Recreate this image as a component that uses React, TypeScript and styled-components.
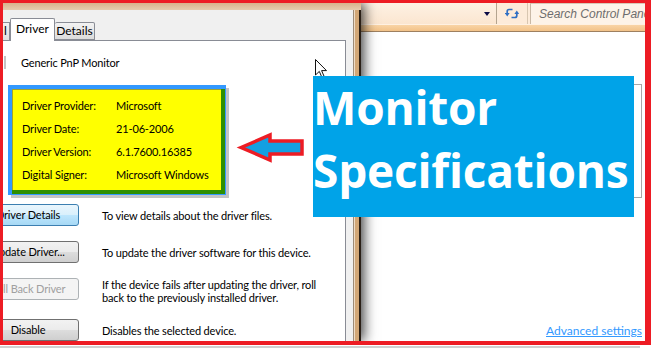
import styled, { createGlobalStyle } from "styled-components";

const GlobalStyle = createGlobalStyle`
  html, body {
    margin: 0;
    padding: 0;
    background: #fff;
  }
  body {
    width: 651px;
    height: 348px;
    overflow: hidden;
  }
`;

const ui = `"Lato", "Liberation Sans", sans-serif`;

const driverInfo = [
  ["Driver Provider:", "Microsoft"],
  ["Driver Date:", "21-06-2006"],
  ["Driver Version:", "6.1.7600.16385"],
  ["Digital Signer:", "Microsoft Windows"],
];

const actions: {
  label: string;
  text: string;
  variant: "hot" | "normal" | "disabled";
  top?: boolean;
}[] = [
  { label: "Driver Details", text: "To view details about the driver files.", variant: "hot" },
  { label: "Update Driver...", text: "To update the driver software for this device.", variant: "normal" },
  {
    label: "Roll Back Driver",
    text: "If the device fails after updating the driver, roll back to the previously installed driver.",
    variant: "disabled",
    top: true,
  },
  { label: "Disable", text: "Disables the selected device.", variant: "normal" },
];

export default function App() {
  return (
    <>
      <GlobalStyle />
      <Page>
        <Frame>
          <Dialog>
            <DialogTop />
            <DialogMain>
              <DialogBody>
                <Tabs>
                  <TabStub>l</TabStub>
                  <Tab $active $width={45}>Driver</Tab>
                  <Tab $width={40}>Details</Tab>
                </Tabs>
                <Panel>
                  <DeviceHeader>
                    <DeviceIcon />
                    <DeviceName>Generic PnP Monitor</DeviceName>
                  </DeviceHeader>
                  <InfoFrame>
                    <InfoBox>
                      {driverInfo.map(([k, v]) => (
                        <InfoRow key={k}>
                          <span>{k}</span>
                          <span>{v}</span>
                        </InfoRow>
                      ))}
                    </InfoBox>
                  </InfoFrame>
                  <ActionList>
                    {actions.map((a) => (
                      <ActionRow key={a.label} $top={a.top}>
                        <WinButton $variant={a.variant}>{a.label}</WinButton>
                        <ActionText>{a.text}</ActionText>
                      </ActionRow>
                    ))}
                  </ActionList>
                </Panel>
              </DialogBody>
              <DialogEdge />
            </DialogMain>
          </Dialog>

          <CPWindow>
            <CPToolbar>
              <AddressBox>
                <DropArrow />
              </AddressBox>
              <RefreshButton>
                <svg width="14" height="13" viewBox="0 0 14 13">
                  <path d="M7.5 2.5 H4 Q2.2 2.5 2.2 4.5 V6.5" fill="none" stroke="#2f6fc4" strokeWidth="1.7" />
                  <path d="M-0.2 6 L2.2 9.5 L4.6 6 Z" fill="#2f6fc4" />
                  <path d="M6.5 10.5 H10 Q11.8 10.5 11.8 8.5 V6.5" fill="none" stroke="#2f6fc4" strokeWidth="1.7" />
                  <path d="M9.4 7 L11.8 3.5 L14.2 7 Z" fill="#2f6fc4" />
                </svg>
              </RefreshButton>
              <SearchBox>Search Control Panel</SearchBox>
            </CPToolbar>
            <CPBand />
            <CPBody>
              <SpecFrame />
              <AdvancedLink>Advanced settings</AdvancedLink>
            </CPBody>
          </CPWindow>
        </Frame>
        <BottomStrip />

        <Cursor width="13" height="20" viewBox="0 0 13 20">
          <path d="M0.5 0.5 V16 L4.3 12.4 L7 18.6 L9.2 17.6 L6.6 11.6 H11.5 Z" fill="#fff" stroke="#111" strokeWidth="1" />
        </Cursor>

        <Arrow width="74" height="35" viewBox="0 0 74 35">
          <polygon
            points="7,17.5 36,5 36,11 68,11 68,24 36,24 36,30"
            fill="#14a0e2"
            stroke="#ed1c24"
            strokeWidth="3.5"
          />
        </Arrow>

        <TitleBanner>
          Monitor
          <br />
          Specifications
        </TitleBanner>
      </Page>
    </>
  );
}

const Page = styled.div`
  position: relative;
  width: 651px;
  height: 348px;
  overflow: hidden;
  font-family: ${ui};
  background: #fff;
`;

const Frame = styled.div`
  box-sizing: border-box;
  height: 345px;
  border-style: solid;
  border-color: #ed1c24;
  border-width: 3px 6px 4px 3px;
  display: flex;
  overflow: hidden;
`;

const Dialog = styled.div`
  width: 358px;
  flex-shrink: 0;
  display: flex;
  flex-direction: column;
  position: relative;
  z-index: 1;
  box-shadow: 3px 0 12px rgba(0, 0, 0, 0.75);
`;

const DialogTop = styled.div`
  height: 7px;
  background: linear-gradient(#d8b28b, #e7ccae);
`;

const DialogMain = styled.div`
  flex: 1;
  display: flex;
  min-height: 0;
`;

const DialogBody = styled.div`
  flex: 1;
  background: #f0f0f0;
  display: flex;
  flex-direction: column;
  overflow: hidden;
`;

const DialogEdge = styled.div`
  width: 8px;
  background: linear-gradient(
    to right,
    #9c8b78 0 1px,
    #efdcc6 1px 2px,
    #d3a878 2px 6px,
    #2a1f16 6px 8px
  );
`;

const Tabs = styled.div`
  height: 30px;
  display: flex;
  align-items: flex-end;
  flex-shrink: 0;
`;

const TabStub = styled.div`
  box-sizing: border-box;
  width: 7px;
  height: 18px;
  border-top: 1px solid #898c95;
  border-right: 1px solid #898c95;
  background: linear-gradient(#f2f2f2, #e0e0e0);
  font-size: 12px;
  line-height: 16px;
  padding-left: 1px;
  overflow: hidden;
  color: #000;
`;

const Tab = styled.div<{ $active?: boolean; $width: number }>`
  box-sizing: border-box;
  position: relative;
  z-index: 2;
  width: ${(p) => p.$width}px;
  height: ${(p) => (p.$active ? 23 : 18)}px;
  margin-bottom: ${(p) => (p.$active ? -1 : 0)}px;
  border: 1px solid #898c95;
  border-bottom: ${(p) => (p.$active ? "none" : "1px solid #898c95")};
  border-left: ${(p) => (p.$active ? "1px solid #898c95" : "none")};
  border-radius: 2px 2px 0 0;
  background: ${(p) => (p.$active ? "#fff" : "linear-gradient(#f3f3f3, #dcdcdc)")};
  font-size: 12px;
  line-height: ${(p) => (p.$active ? 20 : 16)}px;
  text-align: center;
  color: #000;
`;

const Panel = styled.div`
  flex: 1;
  background: #fff;
  border-top: 1px solid #898c95;
  border-right: 1px solid #898c95;
  margin-right: 7px;
  overflow: hidden;
  display: flex;
  flex-direction: column;
  letter-spacing: -0.15px;
`;

const DeviceHeader = styled.div`
  display: flex;
  align-items: center;
  height: 14px;
  margin-top: 15px;
`;

const DeviceIcon = styled.div`
  width: 2px;
  height: 13px;
  margin-left: 1px;
  background: #c4c4c4;
`;

const DeviceName = styled.div`
  margin-left: 15px;
  font-size: 11px;
  color: #000;
`;

const InfoFrame = styled.div`
  box-sizing: border-box;
  width: 218px;
  height: 110px;
  margin: 16px 0 0 5px;
  flex-shrink: 0;
  padding: 4px 1px 1px 4px;
  background: #3399ff;
  box-shadow: 3px 3px 0 #c4c4c4;
`;

const InfoBox = styled.div`
  box-sizing: border-box;
  height: 100%;
  background: #ffff00;
  border-right: 4px solid #2f8f00;
  border-bottom: 4px solid #2f8f00;
  box-shadow: inset 1px 1px 0 #a3a32a;
  padding: 5px 0 0 10px;
`;

const InfoRow = styled.div`
  display: grid;
  grid-template-columns: 94px auto;
  height: 23px;
  align-items: center;
  font-size: 11px;
  color: #000;
  white-space: nowrap;
`;

const ActionList = styled.div`
  display: flex;
  flex-direction: column;
  gap: 15px;
  margin-top: 9px;
`;

const ActionRow = styled.div<{ $top?: boolean }>`
  display: flex;
  align-items: ${(p) => (p.$top ? "flex-start" : "center")};
  gap: 23px;
  margin-left: -26px;
`;

const buttonSkins = {
  hot: `
    border: 1px solid #3c7fb1;
    background: linear-gradient(#eaf6fd 0%, #d9f0fc 50%, #bee6fd 51%, #a7d9f5 100%);
    color: #000;
  `,
  normal: `
    border: 1px solid #707070;
    background: linear-gradient(#f2f2f2 0%, #ebebeb 50%, #dddddd 51%, #cfcfcf 100%);
    color: #000;
  `,
  disabled: `
    border: 1px solid #adb2b5;
    background: #f4f4f4;
    color: #a0a0a0;
  `,
};

const WinButton = styled.div<{ $variant: "hot" | "normal" | "disabled" }>`
  box-sizing: border-box;
  width: 102px;
  height: 22px;
  flex-shrink: 0;
  border-radius: 3px;
  font-size: 11px;
  line-height: 20px;
  text-align: center;
  white-space: nowrap;
  ${(p) => buttonSkins[p.$variant]}
`;

const ActionText = styled.div`
  width: 225px;
  font-size: 11px;
  line-height: 13px;
  color: #000;
`;

const CPWindow = styled.div`
  flex: 1;
  min-width: 0;
  display: flex;
  flex-direction: column;
  background: #fff;
`;

const CPToolbar = styled.div`
  height: 21px;
  display: flex;
  background: #fdebd9;
  flex-shrink: 0;
`;

const AddressBox = styled.div`
  width: 136px;
  display: flex;
  align-items: center;
  justify-content: flex-end;
  padding-right: 6px;
  box-sizing: border-box;
  border-right: 1px solid #b4a48f;
  background: linear-gradient(#fdf1e4, #fbe6d0);
`;

const DropArrow = styled.div`
  width: 0;
  height: 0;
  border-left: 3.5px solid transparent;
  border-right: 3.5px solid transparent;
  border-top: 4px solid #0b0b45;
`;

const RefreshButton = styled.div`
  width: 30px;
  display: flex;
  align-items: center;
  justify-content: center;
  border-right: 1px solid #d8c6b0;
`;

const SearchBox = styled.div`
  flex: 1;
  margin-left: 2px;
  border-left: 1px solid #c9b9a6;
  border-top: 1px solid #d9c9b6;
  background: #fdf3e8;
  padding-left: 8px;
  font-family: "Liberation Sans", sans-serif;
  font-style: italic;
  font-size: 12px;
  line-height: 20px;
  color: #6d6d6d;
  white-space: nowrap;
  overflow: hidden;
`;

const CPBand = styled.div`
  height: 6px;
  flex-shrink: 0;
  border-top: 1px solid #fff1e2;
  border-bottom: 1px solid #9e8060;
  background: linear-gradient(#f9d4a6, #f2c288);
`;

const CPBody = styled.div`
  flex: 1;
  display: flex;
  flex-direction: column;
`;

const SpecFrame = styled.div`
  box-sizing: border-box;
  height: 114px;
  margin: 52px 3px 0 19px;
  border: 1px solid #a8a8a8;
`;

const AdvancedLink = styled.a`
  margin: auto 3px 3px 0;
  align-self: flex-end;
  font-size: 12px;
  line-height: 14px;
  color: #3399ff;
  text-decoration: underline;
`;

const BottomStrip = styled.div`
  height: 3px;
  width: 640px;
  box-sizing: border-box;
  border-bottom: 2px solid #d0d0d0;
`;

const Cursor = styled.svg`
  position: absolute;
  left: 315px;
  top: 59px;
  z-index: 4;
`;

const Arrow = styled.svg`
  position: absolute;
  left: 234px;
  top: 130px;
  z-index: 5;
`;

const TitleBanner = styled.div`
  position: absolute;
  left: 313px;
  top: 76px;
  width: 321px;
  height: 141px;
  z-index: 5;
  background: #00a3e8;
  color: #fff;
  font-family: "Open Sans", "Liberation Sans", sans-serif;
  font-weight: 700;
  font-size: 46px;
  line-height: 63px;
  letter-spacing: -0.2px;
  white-space: nowrap;
  overflow: hidden;
`;
